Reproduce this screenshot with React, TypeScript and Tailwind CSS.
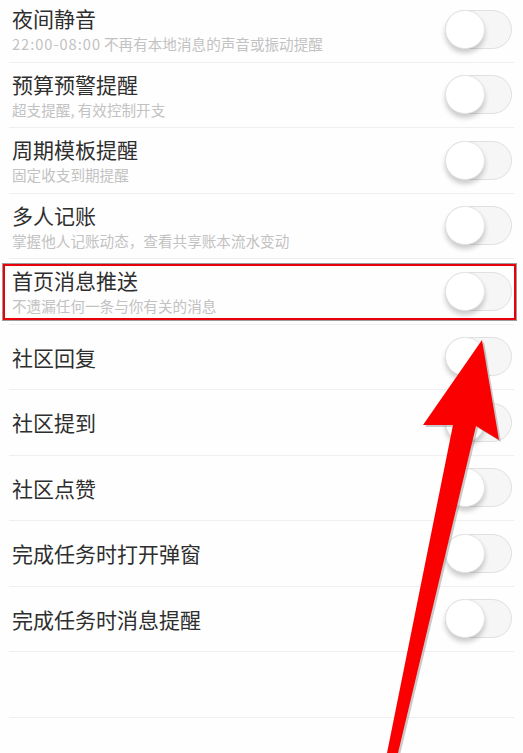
const rows: { title: string; time?: string; sub?: string; highlight?: boolean }[] = [
  { title: "夜间静音", time: "22:00-08:00", sub: "不再有本地消息的声音或振动提醒" },
  { title: "预算预警提醒", sub: "超支提醒, 有效控制开支" },
  { title: "周期模板提醒", sub: "固定收支到期提醒" },
  { title: "多人记账", sub: "掌握他人记账动态，查看共享账本流水变动" },
  { title: "首页消息推送", sub: "不遗漏任何一条与你有关的消息", highlight: true },
  { title: "社区回复" },
  { title: "社区提到" },
  { title: "社区点赞" },
  { title: "完成任务时打开弹窗" },
  { title: "完成任务时消息提醒" },
  { title: "" },
];

function Toggle() {
  return (
    <div className="relative mr-[2px] h-[39px] w-[67px] shrink-0 rounded-full border border-[#e0e0e0] bg-[#f6f6f6]">
      <div className="absolute -left-px -top-px h-[39px] w-[40px] rounded-full border border-[#e4e4e4] bg-white shadow-[0_4px_5px_rgba(0,0,0,0.2)]" />
    </div>
  );
}

function Arrow() {
  return (
    <svg
      className="pointer-events-none absolute left-0 top-0"
      width="523"
      height="753"
      viewBox="0 0 523 753"
    >
      <polygon
        points="482,340 499,440 476,426 398,753 387,753 453,425 423,425"
        fill="#8a8a8a"
        opacity="0.45"
        transform="translate(2 2)"
      />
      <polygon points="482,340 499,440 476,426 398,753 387,753 453,425 423,425" fill="#fb0000" />
    </svg>
  );
}

export default function App() {
  return (
    <div
      className="relative h-[753px] w-[523px] overflow-hidden bg-[#fefefe]"
      style={{ fontFamily: '"Noto Sans CJK SC", sans-serif' }}
    >
      <div className="-mt-[3px]">
        {rows.map((r, i) => (
          <div key={i} className="relative mx-[9px] flex h-[65.5px] items-center justify-between border-b border-[#efefef]">
            {r.highlight && (
              <div className="absolute -left-[6px] -right-[2px] top-[5px] bottom-[4px] border-2 border-[#e8000b] shadow-[0_0_0_1px_rgba(90,90,90,0.6)]" />
            )}
            {r.title && (
              <>
                <div className="flex flex-col pl-[3px]">
                  <span className="text-[21px] leading-[26px] text-[#2e2e2e]">{r.title}</span>
                  {r.sub && (
                    <span className="mt-[4px] text-[14.6px] leading-[18px] text-[#c2c2c2]">
                      {r.time && <span className="mr-[3px] tracking-[1px]">{r.time}</span>}
                      {r.sub}
                    </span>
                  )}
                </div>
                <Toggle />
              </>
            )}
          </div>
        ))}
      </div>
      <Arrow />
    </div>
  );
}
